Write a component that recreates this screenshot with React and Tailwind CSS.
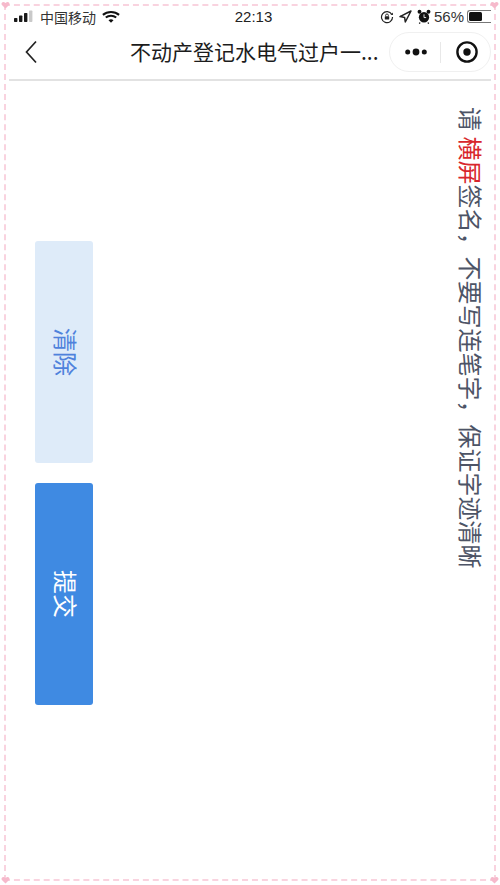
const cjk = { fontFamily: '"Noto Sans CJK SC", "Liberation Sans", sans-serif' };
const sans = { fontFamily: '"Liberation Sans", "Noto Sans CJK SC", sans-serif' };
const vertical = { writingMode: 'vertical-rl', textOrientation: 'sideways' };

function Heart({ className }) {
  return (
    <svg className={`absolute ${className}`} width="9" height="8" viewBox="0 0 10 9">
      <path d="M5 8.5 1 4.6C-.6 2.6 1.9-.6 5 2.2 8.1-.6 10.6 2.6 9 4.6Z" fill="#f6b9cb" />
    </svg>
  );
}

function StatusBar() {
  return (
    <div className="relative flex h-[28px] items-center justify-between pl-[5px] pt-[1px] text-[#1a1a1a]" style={sans}>
      <div className="flex w-[182px] items-center">
        <svg width="20" height="13" viewBox="0 0 20 13" className="mr-[6px]">
          <rect x="0" y="8" width="3.4" height="4" rx=".7" fill="#1a1a1a" />
          <rect x="5" y="5.5" width="3.4" height="6.5" rx=".7" fill="#1a1a1a" />
          <rect x="10" y="3" width="3.4" height="9" rx=".7" fill="#1a1a1a" />
          <rect x="15" y="0.5" width="3.4" height="11.5" rx=".7" fill="#c9c9c9" />
        </svg>
        <span className="text-[14px] leading-none text-[#333]" style={cjk}>中国移动</span>
        <svg width="18" height="14" viewBox="0 0 20 14" className="ml-[6px]">
          <path d="M1 4.6C6 .4 14 .4 19 4.6" fill="none" stroke="#111" strokeWidth="2.3" />
          <path d="M4.2 7.6C7.5 5 12.5 5 15.8 7.6" fill="none" stroke="#111" strokeWidth="2.3" />
          <path d="M7.2 10.5C9 9.3 11 9.3 12.8 10.5L10 13.4Z" fill="#111" />
        </svg>
      </div>
      <span className="text-[15px] font-medium leading-none text-[#222]">22:13</span>
      <div className="flex w-[180px] items-center justify-end">
        <svg width="14" height="14" viewBox="0 0 14 14" className="mr-[5px]">
          <path d="M11.8 4.5A5.5 5.5 0 1 0 12.5 7" fill="none" stroke="#222" strokeWidth="1.2" />
          <path d="M10.6 4.8 13 5 12.8 2.4Z" fill="#222" />
          <rect x="4.8" y="6.2" width="4.4" height="3.4" rx=".5" fill="#222" />
          <path d="M5.6 6.2V5.4a1.4 1.4 0 0 1 2.8 0v.8" fill="none" stroke="#222" strokeWidth=".9" />
        </svg>
        <svg width="13" height="13" viewBox="0 0 13 13" className="mr-[5px]">
          <path d="M12 1 6.3 12 5.6 7.4 1 6.6Z" fill="none" stroke="#222" strokeWidth="1.5" strokeLinejoin="round" />
        </svg>
        <svg width="14" height="15" viewBox="0 0 13 14" className="mr-[3px]">
          <circle cx="6.5" cy="7.7" r="4.8" fill="#111" />
          <circle cx="2.3" cy="2.6" r="1.8" fill="#111" />
          <circle cx="10.7" cy="2.6" r="1.8" fill="#111" />
          <path d="M6.5 5v3h2" fill="none" stroke="#fff" strokeWidth=".8" />
          <path d="M3 12.7 2 13.6M10 12.7l1 .9" stroke="#111" strokeWidth="1.2" />
        </svg>
        <span className="mr-[3px] text-[15px] leading-none text-[#333]">56%</span>
        <div className="h-[13px] w-[24px] rounded-l-[3px] border border-r-0 border-[#777] p-[1px]">
          <div className="h-full w-[13px] rounded-[1.5px] bg-[#111]" />
        </div>
      </div>
    </div>
  );
}

function NavBar() {
  return (
    <div className="relative flex h-[51px] items-center border-b-2 border-[#e2e2e2] pb-[6px]">
      <svg width="14" height="24" viewBox="0 0 14 24" className="ml-[15px] shrink-0">
        <path d="M12 1.5 2.5 12 12 22.5" fill="none" stroke="#222" strokeWidth="1.7" />
      </svg>
      <div className="ml-[92px] text-[21px] leading-none whitespace-nowrap text-[#1c1c1c]" style={cjk}>不动产登记水电气过户一...</div>
      <div className="absolute right-0 top-[2px] flex h-[40px] w-[102px] items-center rounded-full border border-[#f0f0f0]">
        <svg width="22" height="8" viewBox="0 0 22 8" className="ml-[15px] shrink-0">
          <circle cx="2.7" cy="4" r="2.5" fill="#111" />
          <circle cx="11" cy="4" r="3.4" fill="#111" />
          <circle cx="19.3" cy="4" r="2.5" fill="#111" />
        </svg>
        <div className="ml-[13px] h-[21px] w-px shrink-0 bg-[#e8e8e8]" />
        <svg width="22" height="22" viewBox="0 0 22 22" className="ml-[15px] shrink-0">
          <circle cx="11" cy="11" r="9.6" fill="none" stroke="#111" strokeWidth="2.4" />
          <circle cx="11" cy="11" r="3.7" fill="#111" />
        </svg>
      </div>
    </div>
  );
}

export default function App() {
  return (
    <div className="relative h-[885px] w-[500px] overflow-hidden bg-white" style={cjk}>
      <div className="pointer-events-none absolute inset-[4px] border-2 border-dashed border-[#f9d3df]" />
      <Heart className="left-[1px] top-[1px]" />
      <Heart className="right-[1px] top-[1px]" />
      <Heart className="left-[1px] bottom-[1px]" />
      <Heart className="right-[1px] bottom-[1px]" />
      <div className="px-[9px] pt-[2px]">
        <StatusBar />
        <NavBar />
        <div className="flex justify-between pl-[26px] pr-[7px]">
          <div className="flex flex-col gap-[20px] pt-[160px]">
            <button className="flex h-[222px] w-[58px] items-center justify-center rounded-[3px] bg-[#deebf9] pl-[4px] text-[24px] leading-none text-[#4f82dc]" style={vertical}>清除</button>
            <button className="flex h-[222px] w-[58px] items-center justify-center rounded-[3px] bg-[#3f8ae2] pl-[4px] text-[24px] leading-none text-white" style={vertical}>提交</button>
          </div>
          <div className="pt-[26px] text-[24px] leading-[26px] whitespace-pre text-[#4d5466]" style={vertical}>
            请 <span className="text-[#d8262c]">横屏</span>签名，不要写连笔字，保证字迹清晰
          </div>
        </div>
      </div>
    </div>
  );
}
